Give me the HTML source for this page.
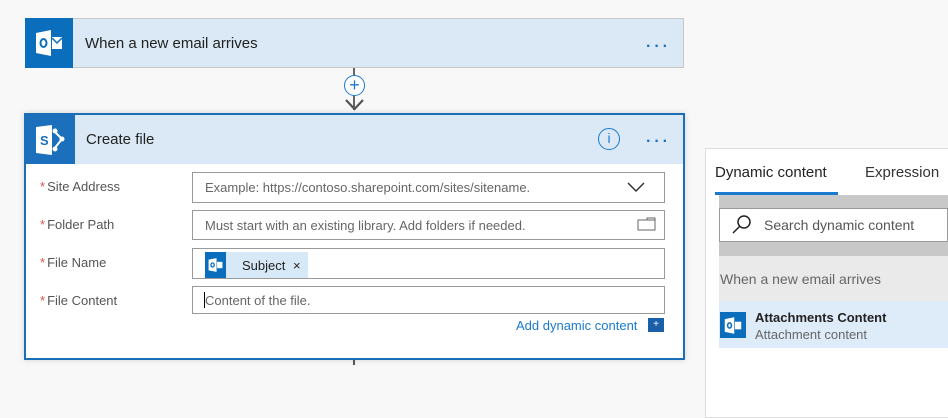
<!DOCTYPE html>
<html><head><meta charset="utf-8"><style>
*{box-sizing:border-box;margin:0;padding:0}
body{width:948px;height:412px;background:#f8f8f8;font-family:"Liberation Sans",sans-serif;position:relative;overflow:hidden;color:#222}
.a{position:absolute}
.lbl{position:absolute;left:40px;font-size:13px;color:#555}
.lbl b{color:#d9534f;font-weight:normal;margin-right:2px}
.inp{position:absolute;left:192px;width:473px;border:1px solid #999;background:#fff;font-size:13px;color:#666;padding-left:12px;display:flex;align-items:center}
.dots{position:absolute;font-size:16px;color:#1a6fc0;letter-spacing:3px;font-weight:bold}
</style></head><body>
<div class="a" style="left:25px;top:18px;width:659px;height:50px;border:1px solid #c8c8c8;background:#dae9f5"></div>
<div class="a" style="left:25px;top:18px;width:48px;height:50px;background:#0a6ebd"></div>
<svg class="a" style="left:34px;top:28px" width="30" height="30" viewBox="0 0 30 30"><path d="M2 5 L17 2 L17 28 L2 25Z" fill="#fff"/><ellipse cx="9.5" cy="15" rx="3" ry="4" fill="none" stroke="#0a6ebd" stroke-width="2"/><path d="M18 9 H28 V21 H18Z" fill="#fff"/><path d="M18 10 L23 15 L28 10" fill="none" stroke="#0a6ebd" stroke-width="1.5"/></svg>
<div class="a" style="left:85px;top:35px;font-size:15px;color:#222">When a new email arrives</div>
<div class="dots" style="left:646px;top:38px">···</div>
<div class="a" style="left:353px;top:68px;width:2px;height:42px;background:#666"></div>
<div class="a" style="left:344px;top:75px;width:21px;height:21px;border-radius:50%;border:1px solid #1a7ad0;background:#fff;color:#1a7ad0;font-size:18px;line-height:18px;text-align:center">+</div>
<svg class="a" style="left:344px;top:96px" width="21" height="17"><path d="M2 4 L10.5 13 L19 4" fill="none" stroke="#555" stroke-width="2.2"/></svg>
<div class="a" style="left:24px;top:113px;width:661px;height:247px;border:2px solid #1a6fb6;background:#fff;box-shadow:0 0 6px rgba(0,0,0,.15)"></div>
<div class="a" style="left:26px;top:115px;width:657px;height:49px;background:#dae9f5"></div>
<div class="a" style="left:26px;top:115px;width:49px;height:49px;background:#1b6fbb"></div>
<svg class="a" style="left:34px;top:124px" width="34" height="32" viewBox="0 0 34 32"><path d="M2 3 L18 1 V31 L2 29Z" fill="#fff"/><text x="6" y="21" font-size="13" font-weight="bold" fill="#1b6fbb" font-family="Liberation Sans">S</text><path d="M20 7 L28 15 L20 25" fill="none" stroke="#fff" stroke-width="2"/><circle cx="21" cy="7" r="2.5" fill="#fff"/><circle cx="28" cy="15" r="2.5" fill="#fff"/><circle cx="21" cy="25" r="2.5" fill="#fff"/></svg>
<div class="a" style="left:86px;top:131px;font-size:15px">Create file</div>
<div class="a" style="left:598px;top:128px;width:22px;height:22px;border-radius:50%;border:1.5px solid #1a7ad0;color:#1a7ad0;font-size:14px;line-height:19px;text-align:center">i</div>
<div class="dots" style="left:646px;top:133px">···</div>
<div class="lbl" style="top:179px"><b>*</b>Site Address</div>
<div class="inp" style="top:172px;height:31px">Example: https://contoso.sharepoint.com/sites/sitename.</div>
<svg class="a" style="left:626px;top:180px" width="20" height="14"><path d="M2 3 L10 11 L18 3" fill="none" stroke="#333" stroke-width="1.5"/></svg>
<div class="lbl" style="top:217px"><b>*</b>Folder Path</div>
<div class="inp" style="top:210px;height:30px">Must start with an existing library. Add folders if needed.</div>
<svg class="a" style="left:637px;top:216px" width="20" height="16"><path d="M1 4 H10 V2 H18 V14 H1Z M1 4 V14 M10 4 H18" fill="none" stroke="#666" stroke-width="1"/></svg>
<div class="lbl" style="top:255px"><b>*</b>File Name</div>
<div class="inp" style="top:248px;height:31px;padding-left:0"></div>
<div class="a" style="left:205px;top:252px;width:103px;height:26px;background:#d7e8f6"></div>
<div class="a" style="left:205px;top:252px;width:21px;height:26px;background:#0a6ebd"></div>
<svg class="a" style="left:207px;top:257px" width="17" height="16" viewBox="0 0 30 30"><path d="M2 5 L17 2 L17 28 L2 25Z" fill="#fff"/><ellipse cx="9.5" cy="15" rx="3" ry="4" fill="none" stroke="#0a6ebd" stroke-width="2.5"/><path d="M18 9 H28 V21 H18Z" fill="#fff"/></svg>
<div class="a" style="left:242px;top:258px;font-size:13px">Subject <span style="margin-left:4px">×</span></div>
<div class="lbl" style="top:293px"><b>*</b>File Content</div>
<div class="inp" style="top:286px;height:28px">Content of the file.</div>
<div class="a" style="left:204px;top:292px;width:1px;height:16px;background:#000"></div>
<div class="a" style="left:516px;top:318px;font-size:13px;color:#1a7ad0">Add dynamic content</div>
<div class="a" style="left:648px;top:318px;width:16px;height:14px;background:#1b5fa8;color:#fff;font-size:10px;line-height:14px;text-align:center">+</div>
<div class="a" style="left:353px;top:360px;width:2px;height:5px;background:#555"></div>
<div class="a" style="left:705px;top:148px;width:250px;height:270px;background:#fff;border:1px solid #ddd"></div>
<div class="a" style="left:715px;top:164px;font-size:15px;color:#222">Dynamic content</div>
<div class="a" style="left:865px;top:164px;font-size:15px;color:#333">Expression</div>
<div class="a" style="left:715px;top:192px;width:123px;height:3px;background:#1a7ad0"></div>
<div class="a" style="left:719px;top:195px;width:229px;height:61px;background:#c8c8c8"></div>
<div class="a" style="left:719px;top:208px;width:229px;height:34px;background:#fff;border:1px solid #999"></div>
<svg class="a" style="left:731px;top:214px" width="22" height="22"><circle cx="13" cy="8" r="6" fill="none" stroke="#222" stroke-width="1.5"/><path d="M9 12 L2 19" stroke="#222" stroke-width="1.5"/></svg>
<div class="a" style="left:764px;top:217px;font-size:14px;color:#555">Search dynamic content</div>
<div class="a" style="left:719px;top:256px;width:229px;height:45px;background:#eaeaea"></div>
<div class="a" style="left:720px;top:271px;font-size:14px;color:#666">When a new email arrives</div>
<div class="a" style="left:719px;top:301px;width:229px;height:47px;background:#deecf9"></div>
<div class="a" style="left:720px;top:312px;width:26px;height:26px;background:#0a6ebd"></div>
<svg class="a" style="left:723px;top:316px" width="20" height="19" viewBox="0 0 30 30"><path d="M2 5 L17 2 L17 28 L2 25Z" fill="#fff"/><ellipse cx="9.5" cy="15" rx="3" ry="4" fill="none" stroke="#0a6ebd" stroke-width="2.5"/><path d="M18 9 H28 V21 H18Z" fill="#fff"/></svg>
<div class="a" style="left:755px;top:310px;font-size:13px;font-weight:bold;color:#222">Attachments Content</div>
<div class="a" style="left:755px;top:327px;font-size:13px;color:#666">Attachment content</div>
</body></html>
